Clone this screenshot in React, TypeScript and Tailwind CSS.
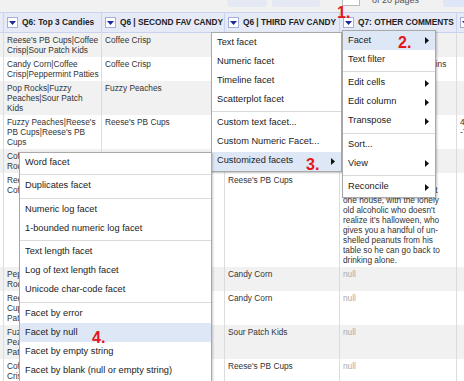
import { ReactNode } from "react";

type Row = {
  grey: boolean;
  c1: string[];
  c2: string[];
  c3: string[];
  c4: string[];
  c5: string[];
  nullC4?: boolean;
};

const rows: Row[] = [
  { grey: true, c1: ["Reese's PB Cups|Coffee", "Crisp|Sour Patch Kids"], c2: ["Coffee Crisp"], c3: ["Coffee Crisp"], c4: [], c5: [] },
  { grey: false, c1: ["Candy Corn|Coffee", "Crisp|Peppermint Patties"], c2: ["Coffee Crisp"], c3: ["Candy Corn"], c4: ["Anything with nuts or raisins"], c5: [] },
  { grey: true, c1: ["Pop Rocks|Fuzzy", "Peaches|Sour Patch", "Kids"], c2: ["Fuzzy Peaches"], c3: ["Sour Patch Kids"], c4: [], c5: [] },
  { grey: false, c1: ["Fuzzy Peaches|Reese's", "PB Cups|Reese's PB", "Cups"], c2: ["Reese's PB Cups"], c3: ["Reese's PB Cups"], c4: [], c5: ["45.5227", "-73.5661"] },
  { grey: true, c1: ["Coffee Crisp|Pop", "Rocks|Candy Corn"], c2: ["Pop Rocks"], c3: ["Candy Corn"], c4: [], c5: [] },
  {
    grey: false,
    c1: ["Reese's PB Cups|", "Coffee Crisp"],
    c2: ["Coffee Crisp"],
    c3: ["Reese's PB Cups"],
    c4: [
      "The worst is when you",
      "get stuck waiting in line at",
      "one house, with the lonely",
      "old alcoholic who doesn't",
      "realize it's halloween, who",
      "gives you a handful of un-",
      "shelled peanuts from his",
      "table so he can go back to",
      "drinking alone.",
    ],
    c5: [],
  },
  { grey: true, c1: ["Peppermint Patties|", "Rocks|Candy Corn"], c2: ["Pop Rocks"], c3: ["Candy Corn"], c4: ["null"], c5: [], nullC4: true },
  { grey: false, c1: ["Reese's PB", "Cups|Peppermint", "Patties"], c2: ["Coffee Crisp"], c3: ["Candy Corn"], c4: ["null"], c5: [], nullC4: true },
  { grey: true, c1: ["Fuzzy", "Peaches|Peppermint", "Patties"], c2: ["Fuzzy Peaches"], c3: ["Sour Patch Kids"], c4: ["null"], c5: [], nullC4: true },
  { grey: false, c1: ["Coffee Crisp|Candy", "Crisp|Pop Rocks"], c2: ["Coffee Crisp"], c3: ["Reese's PB Cups"], c4: ["null"], c5: [], nullC4: true },
];

function Lines({ lines }: { lines: string[] }) {
  return (
    <>
      {lines.map((l, i) => (
        <div key={i} className="whitespace-nowrap">
          {l}
        </div>
      ))}
    </>
  );
}

function DropIcon() {
  return (
    <span className="flex h-[11px] w-[11px] shrink-0 items-center justify-center border border-[#a3afd9] bg-white">
      <svg width="7" height="4" viewBox="0 0 7 4">
        <path d="M0 0H7L3.5 4Z" fill="#1c2a9c" />
      </svg>
    </span>
  );
}

function HeadCell({ w, label }: { w: string; label: string }) {
  return (
    <div className={`flex shrink-0 items-center gap-[4px] overflow-hidden border-l border-[#c9d2ee] pl-[3px] ${w}`}>
      <DropIcon />
      <span className="whitespace-nowrap text-[8.3px] font-bold text-[#222]">{label}</span>
    </div>
  );
}

function Arrow() {
  return (
    <svg width="4" height="7" viewBox="0 0 4 7">
      <path d="M0 0L4 3.5L0 7Z" fill="#111" />
    </svg>
  );
}

function Item({ label, arrow, active, children }: { label: string; arrow?: boolean; active?: boolean; children?: ReactNode }) {
  return (
    <div className={`flex h-[19px] items-center justify-between pl-[5px] pr-[6px] ${active ? "bg-[#dde7f6]" : ""}`}>
      <span className="whitespace-nowrap">{label}</span>
      {children}
      {arrow && <Arrow />}
    </div>
  );
}

function Sep() {
  return <div className="mt-[2px] mb-[1.5px] h-px bg-[#dadada]" />;
}

function Num({ n }: { n: string }) {
  return <span className="text-[16px] font-bold leading-[16px] text-[#e3161b]">{n}</span>;
}

export default function App() {
  return (
    <div className="relative h-[381px] w-[464px] overflow-hidden bg-white font-['Liberation_Sans',Arial,sans-serif]">
      {/* pager toolbar, cut off at the top */}
      <div className="flex h-[12px] overflow-hidden bg-[#f1f1f1]">
        <div className="-mt-[11px] ml-[227px] h-[18px] w-[40px] rounded-[3px] bg-[#e5e9f3]" />
        <div className="-mt-[11px] ml-[5px] h-[18px] w-[48px] rounded-[3px] bg-[#e5e9f3]" />
        <div className="-mt-[10px] ml-[22px] h-[16px] w-[18px] border border-[#b9b9b9] bg-white" />
        <span className="-mt-[6px] ml-[12px] whitespace-nowrap text-[9px] text-[#555]">of 20 pages</span>
        <div className="-mt-[11px] ml-auto h-[18px] w-[21px] rounded-l-[3px] bg-[#dfe6f8]" />
      </div>

      {/* column headers */}
      <div className="flex h-[21px] border-y border-[#c9d2ee] bg-[#e5eaf6]">
        <div className="w-[3px] shrink-0" />
        <HeadCell w="w-[98px]" label="Q6: Top 3 Candies" />
        <HeadCell w="w-[123px]" label="Q6 | SECOND FAV CANDY" />
        <HeadCell w="w-[115px]" label="Q6 | THIRD FAV CANDY" />
        <HeadCell w="w-[117px]" label="Q7: OTHER COMMENTS" />
        <HeadCell w="w-[60px]" label="Q8" />
      </div>

      {/* rows */}
      <div className="text-[8.3px] leading-[10px] text-[#333]">
        {rows.map((r, i) => (
          <div key={i} className={`flex ${r.grey ? "bg-[#f1f1f1]" : "bg-white"}`}>
            <div className="w-[3px] shrink-0" />
            <div className="w-[98px] shrink-0 overflow-hidden border-l border-[#dcdcdc] px-[3px] py-[2px]">
              <Lines lines={r.c1} />
            </div>
            <div className="w-[123px] shrink-0 overflow-hidden border-l border-[#dcdcdc] px-[3px] py-[2px]">
              <Lines lines={r.c2} />
            </div>
            <div className="w-[115px] shrink-0 overflow-hidden border-l border-[#dcdcdc] px-[3px] py-[2px]">
              <Lines lines={r.c3} />
            </div>
            <div className={`w-[117px] shrink-0 overflow-hidden border-l border-[#dcdcdc] px-[3px] py-[2px] ${r.nullC4 ? "text-[#aaa]" : ""}`}>
              <Lines lines={r.c4} />
            </div>
            <div className="w-[60px] shrink-0 overflow-hidden border-l border-[#dcdcdc] px-[3px] py-[2px]">
              <Lines lines={r.c5} />
            </div>
          </div>
        ))}
      </div>

      {/* Facet submenu */}
      <div className="absolute left-[211px] top-[32px] w-[131px] border border-[#a9a9a9] bg-white text-[9.25px] text-[#222] shadow-[1px_1px_2px_rgba(0,0,0,0.2)]">
        <Item label="Text facet" />
        <Item label="Numeric facet" />
        <Item label="Timeline facet" />
        <Item label="Scatterplot facet" />
        <Sep />
        <Item label="Custom text facet..." />
        <Item label="Custom Numeric Facet..." />
        <Item label="Customized facets" arrow active />
      </div>

      {/* column menu */}
      <div className="absolute left-[342px] top-[30px] w-[94px] border border-[#a9a9a9] bg-white text-[9.25px] text-[#222] shadow-[1px_1px_2px_rgba(0,0,0,0.25)]">
        <Item label="Facet" arrow active />
        <Item label="Text filter" />
        <Sep />
        <Item label="Edit cells" arrow />
        <Item label="Edit column" arrow />
        <Item label="Transpose" arrow />
        <Sep />
        <Item label="Sort..." />
        <Item label="View" arrow />
        <Sep />
        <Item label="Reconcile" arrow />
      </div>

      {/* Customized facets submenu */}
      <div className="absolute left-[19px] top-[152px] w-[193px] border border-[#a9a9a9] bg-white text-[9.25px] text-[#222] shadow-[1px_1px_2px_rgba(0,0,0,0.2)]">
        <Item label="Word facet" />
        <Sep />
        <Item label="Duplicates facet" />
        <Sep />
        <Item label="Numeric log facet" />
        <Item label="1-bounded numeric log facet" />
        <Sep />
        <Item label="Text length facet" />
        <Item label="Log of text length facet" />
        <Item label="Unicode char-code facet" />
        <Sep />
        <Item label="Facet by error" />
        <Item label="Facet by null" active />
        <Item label="Facet by empty string" />
        <Item label="Facet by blank (null or empty string)" />
        <Item label="Facet by star" />
      </div>

      {/* step numbers */}
      <div className="absolute left-[337px] top-[0.5px]">
        <Num n="1." />
      </div>
      <div className="absolute left-[398px] top-[30.5px]">
        <Num n="2." />
      </div>
      <div className="absolute left-[306px] top-[153px]">
        <Num n="3." />
      </div>
      <div className="absolute left-[92px] top-[325.5px]">
        <Num n="4." />
      </div>
    </div>
  );
}
